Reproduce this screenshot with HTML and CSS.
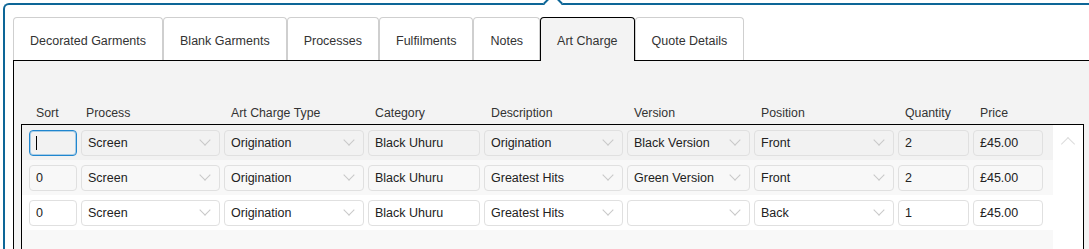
FILE: index.html
```html
<!DOCTYPE html>
<html lang="en">
<head>
    <meta charset="UTF-8">
    <meta name="viewport" content="width=device-width, initial-scale=1.0">
    <title>Quote - Art Charge</title>

    <link rel="stylesheet" href="styles.css">
</head>
<body>
    <div class="frame">
        <div class="tabs">
            <div class="tab">Decorated Garments</div>
            <div class="tab">Blank Garments</div>
            <div class="tab">Processes</div>
            <div class="tab">Fulfilments</div>
            <div class="tab">Notes</div>
            <div class="tab active">Art Charge</div>
            <div class="tab">Quote Details</div>
        </div>

        <div class="panel">
            <div class="cols head">
                <div>Sort</div>
                <div>Process</div>
                <div>Art Charge Type</div>
                <div>Category</div>
                <div>Description</div>
                <div>Version</div>
                <div>Position</div>
                <div>Quantity</div>
                <div>Price</div>
            </div>

            <div class="table">
                <div class="rows" id="rows"></div>
                <div class="scroll"><span class="up"></span></div>
            </div>
        </div>
    </div>

<script>
    const artCharges = [
        { sort: '', process: 'Screen', type: 'Origination', category: 'Black Uhuru', description: 'Origination', version: 'Black Version', position: 'Front', qty: 2, price: 45 },
        { sort: '0', process: 'Screen', type: 'Origination', category: 'Black Uhuru', description: 'Greatest Hits', version: 'Green Version', position: 'Front', qty: 2, price: 45 },
        { sort: '0', process: 'Screen', type: 'Origination', category: 'Black Uhuru', description: 'Greatest Hits', version: '', position: 'Back', qty: 1, price: 45 }
    ];

    function select(text) {
        return `<div class="field select"><span class="val">${text}</span><span class="chev"></span></div>`;
    }

    function renderRows() {
        let html = '';
        artCharges.forEach((item, i) => {
            const sort = i === 0
                ? '<div class="field focus"><span class="cursor"></span></div>'
                : `<div class="field">${item.sort}</div>`;
            html += `
                <div class="cols row ${i === 0 ? 'selected' : ''}">
                    ${sort}
                    ${select(item.process)}
                    ${select(item.type)}
                    <div class="field">${item.category}</div>
                    ${select(item.description)}
                    ${select(item.version)}
                    ${select(item.position)}
                    <div class="field">${item.qty}</div>
                    <div class="field">&pound;${item.price.toFixed(2)}</div>
                </div>
            `;
        });
        html += '<div class="filler"></div>';
        document.getElementById('rows').innerHTML = html;
    }

    renderRows();
</script>
</body>
</html>
```

FILE: styles.css
```css
body {
    margin: 0;
    overflow: hidden;
    background-color: #fff;
    font-family: "Liberation Sans", Arial, sans-serif;
    font-size: 12px;
    color: #222;
}

.frame {
    position: relative;
    margin: 3px -30px 0 3px;
    padding: 12px 0 0 8px;
    height: 300px;
    border: 2px solid #0d6697;
    border-right: none;
    border-radius: 6px 0 0 0;
    background-color: #fff;
}

/* little pointer on the top edge */
.frame::before {
    content: "";
    position: absolute;
    top: -9px;
    left: 541px;
    width: 12px;
    height: 12px;
    border-top: 2px solid #0d6697;
    border-left: 2px solid #0d6697;
    background-color: #fff;
    transform: rotate(45deg);
}

.tabs {
    display: flex;
    align-items: flex-end;
}

.tab {
    height: 38px;
    line-height: 38px;
    padding: 4px 16px 0;
    border: 1px solid #cfcfcf;
    border-bottom: none;
    border-radius: 4px 4px 0 0;
    background-color: #fff;
    color: #333;
    font-size: 12.5px;
    white-space: nowrap;
}

.tab.active {
    position: relative;
    z-index: 1;
    height: 39px;
    margin-bottom: -1px;
    border-color: #000;
    background-color: #f3f3f3;
}

.panel {
    border: 1px solid #000;
    background-color: #f3f3f3;
    padding: 42px 0 0 7px;
    height: 260px;
}

.cols {
    display: grid;
    grid-template-columns: 48px 139px 140px 112px 139px 123px 140px 71px 70px;
    column-gap: 4px;
}

.head {
    height: 20px;
    margin-bottom: 1px;
    padding-left: 8px;
    align-items: center;
    color: #333;
    font-size: 12.3px;
}

.head div {
    padding-left: 7px;
}

.head div:nth-child(2) {
    padding-left: 5px;
}

.table {
    display: flex;
    width: 1063px;
    height: 140px;
    box-sizing: border-box;
    border: 1px solid #000;
    background-color: #fff;
}

.rows {
    display: flex;
    flex-direction: column;
    width: 1031px;
}

.row {
    height: 35px;
    padding-left: 7px;
    align-items: center;
}

.row:nth-child(2) {
    background-color: #f8f8f8;
}

.row.selected {
    background-color: #f2f2f2;
}

.filler {
    flex: 1;
    background-color: #f8f8f8;
}

.field {
    display: flex;
    align-items: center;
    height: 26px;
    box-sizing: border-box;
    padding: 0 6px;
    border: 1px solid #e0e0e0;
    border-radius: 4px;
    font-size: 12.5px;
    white-space: nowrap;
    overflow: hidden;
}

.field.focus {
    border-color: #1f86cf;
    box-shadow: inset 0 0 0 1px rgba(31, 134, 207, 0.35);
}

.cursor {
    width: 1px;
    height: 14px;
    background-color: #000;
}

.val {
    flex: 1;
}

.chev {
    width: 7px;
    height: 7px;
    margin: 0 4px 5px 0;
    border-right: 1px solid #c8c8c8;
    border-bottom: 1px solid #c8c8c8;
    transform: rotate(45deg);
}

.scroll {
    flex: 1;
    display: flex;
    justify-content: center;
    padding-top: 14px;
}

.up {
    width: 9px;
    height: 9px;
    border-top: 1px solid #dcdcdc;
    border-left: 1px solid #dcdcdc;
    transform: rotate(45deg);
}
```
